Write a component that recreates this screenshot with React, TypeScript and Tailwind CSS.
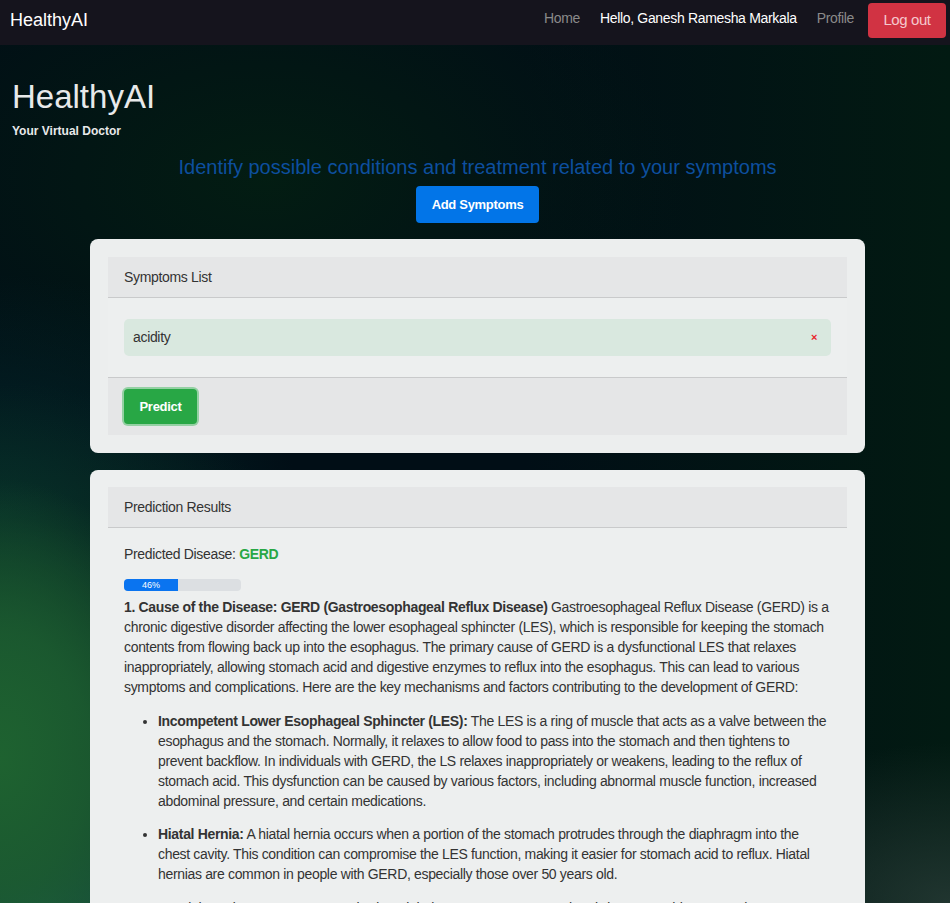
import React from "react";

const symptoms = ["acidity"];

function CardHeader({ title }: { title: string }) {
  return (
    <div className="h-[41px] flex items-center px-4 bg-[#e5e6e7] border-b border-[#c9cacb] text-[14px] tracking-[-0.33px] text-[#333]">
      {title}
    </div>
  );
}

export default function App() {
  const confidence = 46;

  return (
    <div className="h-[903px] overflow-hidden font-['Liberation_Sans',Arial,sans-serif] bg-[#010e16] bg-[radial-gradient(ellipse_200px_280px_at_0%_84%,rgba(30,98,48,1),rgba(28,92,48,0.85)_45%,transparent_100%),radial-gradient(ellipse_380px_340px_at_0%_80%,rgba(26,90,48,0.9),rgba(14,60,36,0.4)_60%,transparent_100%),radial-gradient(ellipse_360px_150px_at_4%_100%,rgba(32,96,90,1),transparent_100%),radial-gradient(ellipse_300px_240px_at_0%_57%,rgba(4,45,45,0.85),transparent_100%),radial-gradient(ellipse_260px_160px_at_100%_100%,rgba(40,60,55,0.8),transparent_100%),radial-gradient(ellipse_420px_260px_at_28%_20%,rgba(3,30,18,0.9),transparent_100%),linear-gradient(to_right,transparent_55%,#021a12_100%)]">
      {/* Navbar */}
      <nav className="h-[45px] bg-[#15141d] flex items-start justify-between pl-[10px] pr-[4px] pt-[3px]">
        <span className="h-[35px] flex items-center text-[18px] text-white">HealthyAI</span>
        <div className="flex items-start text-[14px] tracking-[-0.33px]">
          <a className="h-[31px] flex items-center text-[#8a8a8a]">Home</a>
          <span className="ml-5 h-[31px] flex items-center text-white">Hello, Ganesh Ramesha Markala</span>
          <a className="ml-5 h-[31px] flex items-center text-[#8a8a8a]">Profile</a>
          <button className="ml-[14px] h-[35px] w-[78px] rounded-[4px] bg-[#d13343] text-[15px] tracking-[-0.4px] text-[#f5c8cd]">
            Log out
          </button>
        </div>
      </nav>

      {/* Hero */}
      <div className="pl-3 pt-[33px]">
        <h1 className="text-[33px] leading-[38px] text-[#e8e9ea]">HealthyAI</h1>
        <p className="mt-[6px] text-[12px] font-bold text-[#e8e9ea]">Your Virtual Doctor</p>
      </div>

      <section className="pl-[5px]">
        <div className="flex flex-col items-center">
          <h2 className="mt-[15px] text-[20px] leading-[24px] text-[#0d4f9f]">
            Identify possible conditions and treatment related to your symptoms
          </h2>
          <button className="mt-[7px] h-[37px] w-[123px] rounded-[4px] bg-[#0275e8] text-[13px] font-bold tracking-[-0.3px] text-white">
            Add Symptoms
          </button>
        </div>

        {/* Symptoms card */}
        <div className="mx-auto mt-4 w-[775px] rounded-[8px] bg-[#eceeee] p-[18px]">
          <CardHeader title="Symptoms List" />
          <div className="px-4 py-[21px] bg-[#edefef]">
            {symptoms.map((s) => (
              <div
                key={s}
                className="h-[37px] flex items-center justify-between rounded-[5px] bg-[#d9e8df] pl-[9px] pr-[14px] text-[14px] tracking-[-0.33px] text-[#333]"
              >
                <span>{s}</span>
                <span className="text-[11px] font-bold leading-none text-[#e8242b]">×</span>
              </div>
            ))}
          </div>
          <div className="border-t border-[#c9cacb] bg-[#e5e6e7] px-4 py-[11px]">
            <button className="h-[35px] w-[73px] rounded-[4px] bg-[#28a745] text-[13px] font-bold tracking-[-0.3px] text-white shadow-[0_0_0_2px_rgba(120,200,140,0.75)]">
              Predict
            </button>
          </div>
        </div>

        {/* Results card */}
        <div className="mx-auto mt-[17px] w-[775px] rounded-[8px] bg-[#edefef] px-[18px] pt-[17px] pb-[18px]">
          <CardHeader title="Prediction Results" />
          <div className="px-4 pt-4 text-[14px] leading-[20px] tracking-[-0.33px] text-[#333]">
            <p>
              Predicted Disease: <span className="font-bold text-[#28a745]">GERD</span>
            </p>
            <div className="mt-[15px] h-3 w-[117px] overflow-hidden rounded-[4px] bg-[#dcdfe2]">
              <div
                className="flex h-full items-center justify-center bg-[#0a74f0] text-[9px] leading-none tracking-normal text-white"
                style={{ width: `${confidence}%` }}
              >
                {confidence}%
              </div>
            </div>
            <p className="mt-[6px]">
              <b>1. Cause of the Disease: GERD (Gastroesophageal Reflux Disease)</b> Gastroesophageal Reflux Disease
              (GERD) is a chronic digestive disorder affecting the lower esophageal sphincter (LES), which is
              responsible for keeping the stomach contents from flowing back up into the esophagus. The primary cause
              of GERD is a dysfunctional LES that relaxes inappropriately, allowing stomach acid and digestive enzymes
              to reflux into the esophagus. This can lead to various symptoms and complications. Here are the key
              mechanisms and factors contributing to the development of GERD:
            </p>
            <ul className="mt-[14px] list-disc pl-[34px]">
              <li className="mb-[13px]">
                <b>Incompetent Lower Esophageal Sphincter (LES):</b> The LES is a ring of muscle that acts as a valve
                between the esophagus and the stomach. Normally, it relaxes to allow food to pass into the stomach and
                then tightens to prevent backflow. In individuals with GERD, the LS relaxes inappropriately or weakens,
                leading to the reflux of stomach acid. This dysfunction can be caused by various factors, including
                abnormal muscle function, increased abdominal pressure, and certain medications.
              </li>
              <li className="mb-[14px]">
                <b>Hiatal Hernia:</b> A hiatal hernia occurs when a portion of the stomach protrudes through the
                diaphragm into the chest cavity. This condition can compromise the LES function, making it easier for
                stomach acid to reflux. Hiatal hernias are common in people with GERD, especially those over 50 years
                old.
              </li>
              <li className="mb-[13px]">
                **Weight and Pressure:** Excess body weight increases pressure on the abdomen, pushing stomach contents
                upward against the LES.
              </li>
            </ul>
          </div>
        </div>
      </section>
    </div>
  );
}
